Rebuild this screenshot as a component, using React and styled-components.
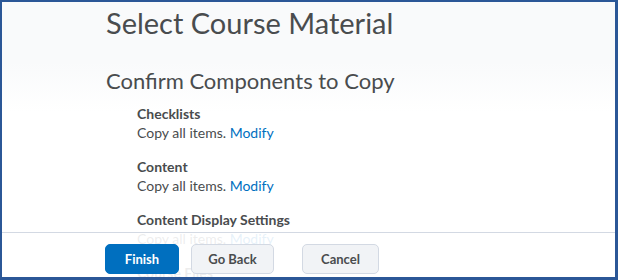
import React from "react";
import styled, { createGlobalStyle } from "styled-components";

const GlobalStyle = createGlobalStyle`
  html, body { margin: 0; padding: 0; background: #ffffff; }
  body { font-family: Lato, "Open Sans", sans-serif; }
`;

const Frame = styled.div`
  position: relative;
  box-sizing: border-box;
  width: 618px;
  height: 280px;
  border-style: solid;
  border-color: #2b5797;
  border-width: 2px 3px 3px 2px;
  overflow: hidden;
  background: linear-gradient(#f9fafb 0px, #f9fafb 60px, #ffffff 110px);
`;

const Content = styled.div`
  padding: 0 0 0 104px;
  color: #494c4e;
`;

const Title = styled.h1`
  margin: 4px 0 0 0;
  font-size: 29px;
  font-weight: 400;
  line-height: 34px;
`;

const Subtitle = styled.h2`
  margin: 28px 0 10px 0;
  font-size: 22px;
  font-weight: 400;
  line-height: 26px;
`;

const ItemList = styled.div`
  padding-left: 31px;
  display: flex;
  flex-direction: column;
  gap: 14px;
`;

const Item = styled.div`
  display: flex;
  flex-direction: column;
`;

const ItemHeading = styled.div`
  font-size: 14px;
  font-weight: 700;
  line-height: 19px;
`;

const ItemText = styled.div`
  font-size: 14px;
  font-weight: 400;
  line-height: 20px;
`;

const Link = styled.a`
  color: #006fbf;
  text-decoration: none;
`;

const Footer = styled.div`
  position: absolute;
  left: 0;
  right: 0;
  bottom: 0;
  height: 45px;
  box-sizing: border-box;
  border-top: 1px solid #d3d9e3;
  background: rgba(255, 255, 255, 0.9);
  display: flex;
  align-items: flex-start;
  padding: 11px 0 0 103px;
`;

const Button = styled.button`
  box-sizing: border-box;
  height: 30px;
  width: ${(p) => p.$w}px;
  margin-left: ${(p) => p.$ml || 0}px;
  border-radius: 5px;
  border: 1px solid ${(p) => (p.$primary ? "#006fbf" : "#d3d9e3")};
  background: ${(p) => (p.$primary ? "#006fbf" : "#f1f3f6")};
  color: ${(p) => (p.$primary ? "#ffffff" : "#494c4e")};
  font-family: Lato, "Open Sans", sans-serif;
  font-size: 13px;
  font-weight: 700;
  padding: 0;
  cursor: pointer;
`;

const items = [
  "Checklists",
  "Content",
  "Content Display Settings",
  "Course Files",
];

export default function App() {
  return (
    <>
      <GlobalStyle />
      <Frame>
        <Content>
          <Title>Select Course Material</Title>
          <Subtitle>Confirm Components to Copy</Subtitle>
          <ItemList>
            {items.map((name) => (
              <Item key={name}>
                <ItemHeading>{name}</ItemHeading>
                <ItemText>
                  Copy all items. <Link href="#">Modify</Link>
                </ItemText>
              </Item>
            ))}
          </ItemList>
        </Content>
        <Footer>
          <Button $primary $w={74}>Finish</Button>
          <Button $w={83} $ml={12}>Go Back</Button>
          <Button $w={77} $ml={28}>Cancel</Button>
        </Footer>
      </Frame>
    </>
  );
}
